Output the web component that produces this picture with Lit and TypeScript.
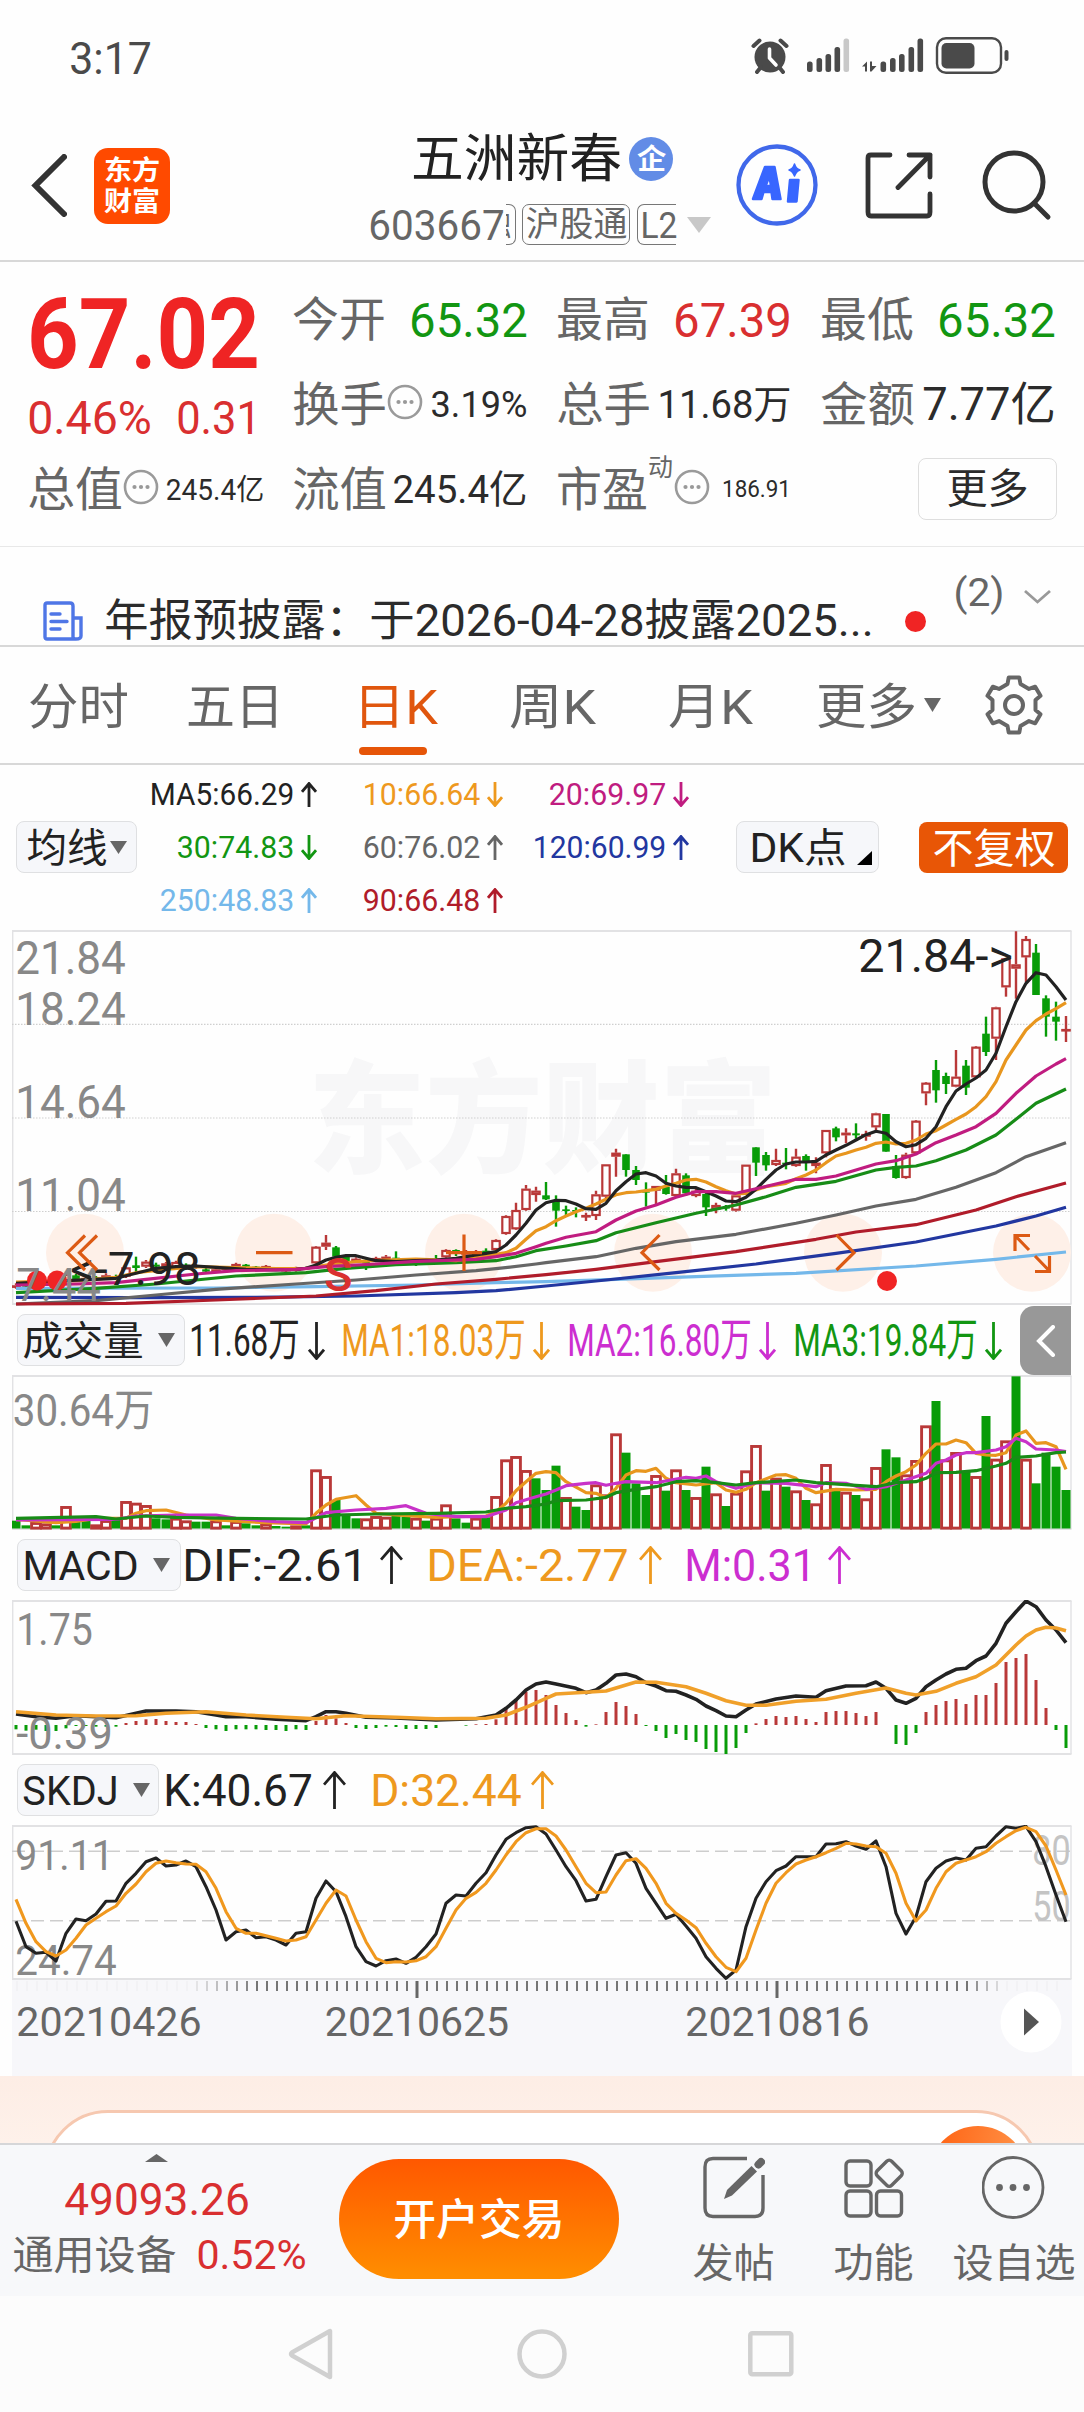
import { LitElement, html, svg, css } from "lit";
import { customElement } from "lit/decorators.js";

type Pt = [number, number];

/* ---------- data: vertical values are in thirds of a pixel inside each panel ---------- */

const parse = (s: string): Pt[] =>
  s.split(";").map((p) => p.split(",").map(Number) as Pt);

const CANDLES = `0r1096,1101,1090,1106;1g1093,1100,1090,1104;2r1090,1100,1085,1104;5r1062,1085,1055,1088;6g1066,1079,1062,1082;7r1074,1080,1070,1084;8g1072,1078,1068,1082;9r1066,1074,1060,1080;10g1068,1074,1064,1078;11r1042,1070,1040,1074;12g1036,1044,1010,1060;13r1025,1040,1020,1044;14g1034,1040,1028,1046;15r1030,1040,1026,1044;16r1026,1044,1022,1046;17g1034,1042,1030,1046;18r1036,1042,1032,1046;19g1048,1055,1044,1056;20r1048,1055,1045,1058;21r1042,1048,1040,1050;22r1032,1040,1028,1042;23g1034,1040,1032,1044;24g1040,1046,1038,1050;25r1038,1050,1035,1052;26g1044,1049,1042,1052;27r1046,1054,1044,1056;28r1042,1052,1040,1055;29g1042,1048,1040,1050;30r980,1030,978,1032;31r968,980,945,990;32g982,1010,978,1012;33g1010,1030,1006,1032;34r1016,1026,1012,1028;35g1020,1030,1018,1050;36r1014,1020,1010,1024;37r1010,1016,1005,1018;38g1013,1016,994,1018;39r1016,1020,1014,1024;40g1020,1026,1016,1038;41r1020,1024,1016,1028;42g1016,1020,1005,1024;43r990,1012,988,1014;44g990,1002,988,1008;45r995,1004,990,1008;46r995,1003,990,1006;47g992,1002,985,1006;48r960,990,958,992;49r888,942,886,944;50r870,928,848,930;51r806,870,795,872;52r812,825,800,845;53g826,838,786,840;54g842,872,826,920;55g868,873,857,885;56g870,875,862,892;57r885,890,878,903;58r823,888,812,900;59r733,830,733,835;60r698,710,686,770;61g703,750,703,770;62g750,780,738,795;63g815,818,787,860;64r798,812,798,858;65g800,822,765,824;66r760,828,746,832;67g766,820,760,828;68r812,828,800,832;69g822,862,818,888;70r855,868,848,880;71g862,866,855,872;72r826,872,826,875;73r734,822,734,824;74g682,728,682,768;75g705,736,696,752;76r720,735,686,738;77g728,732,684,748;78r710,738,686,740;79g708,724,703,752;80r728,738,712,760;81r630,700,630,712;82g625,652,620,664;83r638,646,625,670;84g640,646,610,656;85r642,650,632,662;86r580,622,578,635;87g582,695,582,695;88g738,774,705,776;89r704,774,698,776;90r602,700,600,702;91r488,520,486,556;92g450,511,420,548;93g468,492,458,522;94r470,500,390,502;95g437,503,420,525;96r380,472,378,474;97g341,396,290,408;98r262,356,260,420;99r115,202,115,230;100r133,146,34,236;101r57,112,48,186;102g98,225,72,225;103g235,290,226,350;104g290,305,245,362;105r327,330,288,366`
  .split(";")
  .map((s) => {
    const m = /^(\d+)([rg])(.*)$/.exec(s)!;
    const [top, bot, high, low] = m[3].split(",").map(Number);
    return { i: +m[1], up: m[2] === "r", top, bot, high, low };
  });

const PRICE_LINES: [string, string][] = [
  ["#74b8ea", "0,1105;20,1104;30,1100;40,1095;48,1088;53,1085;60,1078;68,1070;78,1060;90,1038;98,1018;105,996"],
  ["#2237a0", "0,1132;12,1133;24,1132;34,1128;44,1118;48,1112;53,1098;59,1080;66,1058;74,1032;82,1000;90,966;98,918;102,888;105,862"],
  ["#666666", "0,1152;8,1142;14,1125;20,1108;28,1092;34,1080;40,1065;46,1052;48,1046;52,1032;53,1028;58,1010;62,985;66,965;72,943;78,910;82,885;86,858;90,838;94,802;98,758;101,710;105,668"],
  ["#b01c2a", "0,1152;11,1150;20,1140;30,1128;36,1112;42,1092;48,1078;53,1064;58,1048;64,1025;72,995;80,958;84,936;90,914;96,870;100,830;105,789"],
  ["#178c17", "0,1118;8,1105;14,1092;18,1080;22,1068;29,1058;33,1045;38,1034;44,1028;48,1022;50,1010;52,992;55,978;58,962;60,938;64,908;68,880;72,855;75,830;78,802;82,784;86,750;88,742;90,738;92,722;95,690;98,645;100,598;102,550;105,507"],
  ["#e8961e", "0,1086;6,1082;10,1072;12,1058;15,1048;18,1040;22,1043;26,1046;29,1045;31,1035;34,1025;37,1020;40,1017;44,1022;47,1008;48,1003;49,998;50,985;51,958;52,932;53,920;54,902;55,888;56,875;57,865;58,852;59,838;60,824;61,818;62,816;63,812;64,808;65,798;66,790;67,780;68,778;69,786;70,800;71,812;72,822;73,820;75,800;77,790;78,776;79,765;80,750;81,728;82,708;83,700;84,690;85,682;86,670;87,666;88,672;89,670;90,660;91,642;92,632;93,615;94,598;95,582;96,560;97,530;98,485;99,420;100,375;101,330;102,302;103,282;104,266;105,248"],
  ["#222222", "0,1090;5,1082;8,1078;10,1075;12,1060;14,1045;16,1040;18,1038;20,1042;23,1048;26,1050;28,1048;29,1045;30,1035;31,1020;32,1012;33,1007;34,1007;35,1015;36,1022;38,1025;40,1022;42,1020;44,1015;46,1005;47,1000;48,995;49,975;50,945;51,910;52,870;53,848;54,841;55,842;56,852;57,866;58,868;59,850;60,812;61,785;62,762;63,758;64,768;65,790;66,798;67,802;68,803;69,815;70,828;71,843;72,845;73,832;74,808;75,778;76,750;77,732;78,726;79,726;80,724;81,705;82,690;83,676;84,660;85,644;86,634;87,640;88,665;89,680;90,674;91,655;92,620;93,560;94,513;95,492;96,474;97,450;98,400;99,320;100,245;101,190;102,158;103,165;104,200;105,240"],
  ["#c01c80", "0,1095;6,1092;10,1088;13,1078;18,1062;22,1052;28,1048;31,1040;36,1032;40,1024;46,1018;48,1010;50,1000;52,980;53,970;55,952;58,935;60,900;62,873;64,855;66,832;68,815;70,815;72,820;74,806;76,792;78,778;80,778;82,768;84,750;86,732;88,722;90,702;92,668;94,645;96,620;98,580;100,520;102,468;104,432;105,416"],
];

const VOLUME = "662g 676g 668r 672r 676g 620r 662g 660g 675r 662r 658g 605r 610r 617r 655g 658g 655r 663r 665g 665g 663r 676g 665r 670g 676g 672r 678g 680g 678r 676g 510r 530r 600g 645g 655g 657r 650r 652r 645g 650g 655r 662g 655r 615r 655g 668g 655r 652g 590r 480r 470r 512r 535g 570g 497g 593r 620g 630g 555r 585r 402r 458g 550g 585g 527r 572g 510r 570g 593r 500g 582r 618g 580r 513r 437r 572g 535r 560g 573r 600g 612r 494r 565g 577r 585g 597r 503r 448g 472g 525r 482r 378r 303g 480r 458r 512g 530r 348g 478r 423r 229g 478r 550g 458g 500g 570g"
  .split(" ")
  .map((s) => ({ v: parseInt(s), up: s.endsWith("r") }));

const VOLUME_LINES: [string, string][] = [
  ["#e8961e", "0,658;4,668;6,664;8,655;11,655;12,640;13,632;15,630;17,645;20,660;25,668;29,672;30,640;31,615;32,598;34,587;35,615;36,640;38,645;42,652;44,650;47,648;48,635;49,610;50,572;51,545;52,520;53,515;54,518;55,545;57,578;58,580;59,593;60,565;61,525;62,512;63,514;64,505;65,535;66,548;68,555;70,548;71,570;72,577;73,568;74,548;76,525;77,524;78,535;79,565;80,578;82,568;84,570;86,568;87,545;88,528;89,515;90,495;91,460;92,432;93,432;94,420;95,428;96,460;97,465;98,466;99,458;100,405;101,393;102,430;103,428;104,440;105,508"],
  ["#c832c8", "0,660;10,658;12,648;16,645;20,645;22,655;26,665;29,668;31,638;34,630;37,625;39,617;41,640;44,650;47,650;49,630;50,608;52,590;53,582;54,570;55,557;57,550;58,548;59,556;60,550;61,545;64,548;67,532;68,535;69,528;70,545;72,565;74,548;77,550;80,560;81,548;83,550;85,568;87,560;89,540;91,520;92,490;93,480;94,465;95,458;96,458;98,450;99,440;100,415;101,425;102,447;104,450;105,455"],
  ["#178c17", "0,655;8,650;10,657;13,648;16,652;22,655;29,657;32,645;36,642;42,640;47,636;49,625;51,620;53,612;54,602;57,600;59,592;60,578;62,568;64,560;66,545;68,542;70,548;72,555;74,548;78,540;80,548;84,556;86,560;88,548;90,545;91,535;92,518;94,517;96,512;98,498;99,490;100,472;102,468;104,458;105,456"],
];

const HIST = [598, 602, 599, 603, 603, 595, 588, 588, 590, 590, 590, 579, 573, 568, 567, 573, 576, 576, 582, 594, 598, 603, 598, 598, 598, 600, 600, 603, 598, 600, 573, 555, 565, 579, 594, 597, 594, 590, 591, 597, 597, 597, 594, 585, 585, 587, 583, 582, 568, 532, 510, 485, 480, 495, 525, 549, 570, 590, 583, 546, 516, 528, 552, 588, 603, 624, 612, 630, 636, 657, 666, 672, 654, 609, 580, 567, 558, 561, 558, 567, 576, 546, 543, 543, 549, 558, 546, 585, 642, 645, 609, 546, 525, 513, 507, 522, 495, 495, 459, 396, 384, 372, 450, 534, 600, 654];

const MACD_LINES: [string, string][] = [
  ["#222222", "0,552;2,560;4,565;6,557;10,563;12,550;13,543;16,543;18,545;20,555;21,560;23,560;26,568;29,572;30,560;31,545;32,545;33,550;35,562;38,564;42,570;46,566;48,555;49,535;50,510;51,480;52,462;53,456;54,462;56,475;57,488;58,480;59,460;60,435;61,432;62,440;63,458;64,468;65,482;66,484;67,495;68,508;69,528;70,542;71,558;72,560;73,540;74,522;76,507;78,498;80,502;81,482;83,468;85,467;86,456;87,475;88,510;89,520;90,505;91,470;92,450;93,432;94,418;95,415;96,392;97,378;98,340;99,280;100,245;101,213;102,230;103,270;104,300;105,338"],
  ["#f0a02a", "0,545;4,555;8,558;12,557;15,550;19,545;23,555;27,562;30,566;33,557;38,562;42,566;47,565;49,555;51,532;53,505;54,492;57,487;59,483;61,465;62,456;64,457;67,470;69,490;71,512;73,526;75,526;78,514;81,508;84,490;87,474;89,490;90,495;92,484;94,460;96,440;98,405;100,345;101,318;102,300;103,292;104,294;105,302"],
];

const SKDJ_LINES: [string, string][] = [
  ["#222222", "0,484;1,560;2,580;3,577;4,603;5,520;6,477;7,482;8,462;9,424;10,423;11,370;12,340;13,305;14,294;15,318;16,315;17,303;18,320;19,380;20,450;21,540;22,515;23,510;24,533;25,530;26,540;27,555;28,520;29,515;30,415;31,363;32,395;33,470;34,560;35,605;36,618;37,602;38,597;39,610;40,592;41,560;42,522;43,430;44,405;45,408;46,370;47,338;48,285;49,238;50,218;51,203;52,200;53,222;54,270;55,320;56,362;57,423;58,418;59,350;60,285;61,278;62,310;63,385;64,430;65,475;66,463;67,498;68,535;69,590;70,625;71,655;72,630;73,500;74,415;75,365;76,332;77,318;78,290;80,290;81,252;82,251;83,245;84,258;85,268;86,243;87,320;88,460;89,522;90,470;91,365;92,325;93,303;94,294;95,300;96,265;97,260;98,228;99,200;100,205;101,199;102,245;103,320;104,405;105,485"],
  ["#f0981e", "0,418;1,490;2,545;3,575;4,588;5,570;6,535;7,495;8,475;9,455;10,438;11,400;12,372;13,335;14,310;15,303;16,308;17,312;18,313;19,335;20,385;21,455;22,505;23,520;24,520;25,527;26,535;27,543;28,540;29,530;30,480;31,430;32,390;33,408;34,480;35,545;36,595;37,608;38,605;39,606;40,602;41,590;42,560;43,505;44,450;45,415;46,397;47,370;48,330;49,285;50,245;51,218;52,206;53,206;54,228;55,270;56,320;57,370;58,398;59,396;60,345;61,302;62,296;63,325;64,370;65,430;66,460;67,480;68,503;69,550;70,590;71,622;72,635;73,595;74,510;75,430;76,370;77,338;78,312;79,300;80,290;81,278;82,265;83,250;84,252;85,258;86,260;87,280;88,340;89,430;90,483;91,450;92,385;93,335;94,310;95,300;96,290;97,275;98,250;99,230;100,212;101,202;102,215;103,258;104,330;105,405"],
];

/* ---------- drawing helpers ---------- */

const px = (i: number) => 16 + 10 * i;
const py = (v: number) => v / 3;

/** A line of text whose ink spans exactly `w` pixels; the box is as tall as its capitals. */
const fit = (text: string, w: number, size: number, cls = "") => {
  const h = size * 0.72;
  return html`<svg class="t ${cls}" width=${w} height=${h}>
    <text x=${-size * 0.04} y=${h} font-size=${size} textLength=${w + size * 0.08} lengthAdjust="spacingAndGlyphs">${text}</text>
  </svg>`;
};

const label = (text: string, x: number, y: number, w: number, size: number, cls = "") =>
  svg`<text class=${cls} x=${x - size * 0.04} y=${y} font-size=${size} textLength=${w + size * 0.08} lengthAdjust="spacingAndGlyphs">${text}</text>`;

const arrow = (up: boolean, w: number, h: number, cls: string) => {
  const d = up
    ? `M${w / 2} ${h}V2M1 ${w * 0.55 + 1}L${w / 2} 1.5L${w - 1} ${w * 0.55 + 1}`
    : `M${w / 2} 0V${h - 2}M1 ${h - w * 0.55 - 1}L${w / 2} ${h - 1.5}L${w - 1} ${h - w * 0.55 - 1}`;
  return html`<svg class="arrow ${cls}" width=${w} height=${h}><path d=${d} /></svg>`;
};

const tri = (w: number, h: number) =>
  html`<svg class="tri" width=${w} height=${h}><path d="M0 0H${w}L${w / 2} ${h}Z" /></svg>`;

const gap = (w: number) => html`<span style="width:${w}px"></span>`;

const line = ([color, data]: [string, string], width = 3.2) =>
  svg`<polyline class="ln" stroke=${color} stroke-width=${width}
    points=${parse(data).map(([i, v]) => `${px(i)},${py(v).toFixed(1)}`).join(" ")} />`;

const frame = (top: number, bottom: number) => svg`
  <path class="frame" d="M12 ${top}H1071.5M12 ${bottom}H1071.5" />
  <path class="frame side" d="M12.7 ${top}V${bottom}M1071 ${top}V${bottom}" />`;

const more = html`<svg class="moredots" width="36" height="36" viewBox="0 0 36 36">
  <circle cx="18" cy="18" r="16" fill="none" stroke="#9a9a9a" stroke-width="2.6" />
  <circle cx="11.5" cy="18" r="2.1" /><circle cx="18" cy="18" r="2.1" /><circle cx="24.5" cy="18" r="2.1" />
</svg>`;

const GEAR = Array.from({ length: 6 }, (_, k) => {
  const a = (k * Math.PI) / 3 - Math.PI / 2;
  const p = (r: number, d: number) => `${(30 + r * Math.cos(a + d)).toFixed(1)} ${(30 + r * Math.sin(a + d)).toFixed(1)}`;
  return `${p(22, -0.3)}L${p(28, -0.19)}L${p(28, 0.19)}L${p(22, 0.3)}`;
}).join("L");

@customElement("app-root")
export class AppRoot extends LitElement {
  static styles = css`
    :host {
      display: block;
      width: 1084px;
      height: 2412px;
      overflow: hidden;
      background: #fefefe;
      color: #222;
      font-family: Roboto, "Noto Sans CJK SC", sans-serif;
    }
    * { box-sizing: border-box; }
    svg { display: block; flex: none; }
    .t { overflow: visible; fill: currentColor; white-space: pre; }
    .row { display: flex; align-items: center; }
    .arrow { fill: none; stroke: currentColor; stroke-width: 2.8; }
    .tri { fill: #666; }
    .dark { color: #2b2b2b; }
    .black { color: #222; }
    .gray { color: #666; }
    .red { color: #d92f30; }
    .green { color: #129612; }
    .orange { color: #ee991e; }
    .deep { color: #e0560e; }
    .pink { color: #c01c80; }
    .violet { color: #cc2ed0; }
    .blue { color: #2237a0; }
    .sky { color: #74b8ea; }
    .wine { color: #b01c2a; }
    .white { color: #fff; }
    .medium { font-weight: 500; }
    .bold { font-weight: 700; }

    .status { height: 115px; padding: 0 75px 0 71px; justify-content: space-between; color: #4a4a4a; }
    .status .icons { margin-top: -4px; }

    .header { height: 147px; border-bottom: 2px solid #d8d8d8; align-items: flex-start; padding-left: 31px; }
    .back { margin-top: 39px; }
    .logo {
      width: 76px; height: 76px; margin: 33px 0 0 27px; border-radius: 14px; background: #ff4a00;
      display: flex; flex-direction: column; align-items: center; justify-content: center; gap: 12px;
    }
    .title { width: 341px; margin: 18px 0 0 200px; }
    .name { height: 52px; padding-left: 43px; gap: 9px; }
    .badge { width: 44px; height: 44px; border-radius: 50%; background: #628ce6; display: grid; place-items: center; }
    .sub { height: 42px; margin-top: 19px; }
    .tag { height: 41px; margin-top: -2px; border: 1.5px solid #777; border-radius: 7px; display: flex; align-items: center; }
    .tag.cut { width: 10px; border-left: 0; margin: -2px 6px 0 3px; border-radius: 0 7px 7px 0; overflow: hidden; }
    .tag.cut .t { margin-left: -26px; }
    .tag.mid { width: 109px; padding-left: 4px; }
    .tag.l2 { width: 39px; margin-left: 7px; padding-left: 4px; border-right: 0; border-radius: 7px 0 0 7px; }
    .sub .tri { fill: #c8c8c8; margin-left: 11px; }
    .ai { margin: 28px 0 0 25px; }
    .share { margin: 37px 0 0 47px; }
    .search { margin: 34px 0 0 49px; }

    .quote { display: flex; height: 285px; border-bottom: 1.5px solid #e8e8e8; padding-left: 29px; }
    .price { width: 265px; }
    .price .big { height: 71px; margin: 35px 0 0 2px; color: #ef2424; }
    .price .chg { height: 34px; margin-top: 33px; gap: 28px; }
    .price .cell { margin-top: 31px; }
    .grid { display: grid; grid-template-columns: 232px 232px 232px; column-gap: 32px; row-gap: 39px; padding-top: 34px; height: 260px; grid-template-rows: 46px 46px 46px; }
    .cell { display: flex; align-items: center; justify-content: space-between; height: 46px; }
    .cell .row { height: 46px; }
    .cell.c1 { width: 234px; }
    .cell .moredots { margin: -5px 0 0 2px; }
    .moredots { fill: #999; }
    .sup { align-self: flex-start; margin: -8px 0 0 3px; }
    .btn-more { justify-self: end; align-self: center; width: 139px; height: 62px; margin-right: -3px; border: 1.5px solid #dedede; border-radius: 8px; display: grid; place-items: center; }
    .btn-more .t { margin-top: -3px; }

    .news { height: 100px; border-bottom: 2px solid #d8d8d8; padding-left: 43px; align-items: flex-start; }
    .news .doc { margin-top: 53px; }
    .news .txt { margin: 57px 0 0 23px; }
    .news .dot { width: 21px; height: 21px; border-radius: 50%; background: #f02424; margin: 64px 0 0 33px; }
    .news .cnt { margin: 32px 0 0 29px; }
    .news .chev { margin: 42px 0 0 20px; }

    .tabs { height: 118px; border-bottom: 2px solid #d8d8d8; align-items: flex-start; padding: 42px 0 0 30px; }
    .tab { position: relative; height: 34px; }
    .tab.on::after { content: ""; position: absolute; left: 4px; top: 58px; width: 68px; height: 8px; border-radius: 4px; background: #e65508; }
    .tabs .tri { margin: 9px 0 0 9px; }
    .gear { margin: -14px 0 0 43px; }

    .legend { height: 165px; align-items: flex-start; padding-left: 16px; }
    .chip { background: #f6f7fa; border: 1.5px solid #dfe0e2; border-radius: 8px; height: 52px; display: flex; align-items: center; }
    .chip.ma { width: 121px; margin-top: 56px; padding-left: 11px; }
    .chip.dk { width: 143px; margin: 56px 0 0 47px; padding-left: 14px; }
    .chip.dk .corner { margin: 22px 0 0 12px; }
    .mas { display: grid; grid-template-columns: 180px 186px 186px; grid-template-rows: 53px 53px 53px; padding-top: 3px; }
    .ma-item { display: flex; align-items: center; justify-content: flex-end; gap: 8px; }
    .adj { width: 149px; height: 51px; border-radius: 8px; background: #e85606; margin: 57px 0 0 40px; display: grid; place-items: center; }

    .panel { margin-left: 12px; overflow: hidden; }
    .frame { fill: none; stroke: #e2e2e4; stroke-width: 2; }
    .side { stroke-width: 1.4; }
    .dots { stroke: #cfcfcf; stroke-width: 1.2; stroke-dasharray: 1.5 1.5; }
    .dash { stroke: #cdcdcd; stroke-width: 1.4; stroke-dasharray: 13 6; }
    .ln { fill: none; stroke-linejoin: round; }
    .axis { fill: #888; }
    .axis.pale { fill: #c4c4c4; }
    .note { fill: #222; }
    .mark { fill: #d93030; font-weight: 500; }
    .wm { fill: #f7f7f8; font-weight: 900; }
    .ctl { fill: #fef0e8; }
    .ctl-ic { fill: none; stroke: #dc5a14; stroke-width: 3.2; }
    .alert { fill: #f02424; }
    .up { fill: #fff; stroke: #b93838; }
    .upw { stroke: #b93838; stroke-width: 2.4; }
    .dn { fill: #089c08; }
    .dnw { stroke: #089c08; stroke-width: 2.4; }
    .hist { stroke-width: 3; }

    .ind { height: 70px; padding-left: 17px; }
    .ind.vol { height: 69px; }
    .ind .chip { padding-left: 6px; margin-top: -1px; }
    .ind .tri { margin-left: 16px; }
    .tab-fold { width: 51px; height: 69px; margin-left: 18px; border-radius: 14px 0 0 14px; background: #989898; display: grid; place-items: center; }

    .timeline { height: 96px; margin: 0 12px; background: #f7f7fa; }
    .promo { height: 67px; overflow: hidden; background: linear-gradient(#fdede5, #fef1ea); padding: 34px 44px 0; }
    .promo .card { height: 130px; border: 3px solid #f6c8b0; border-radius: 64px; background: #fff; display: flex; justify-content: flex-end; padding: 13px 10px 0 0; }
    .promo .ball { width: 98px; height: 98px; border-radius: 50%; background: linear-gradient(100deg, #ff6010, #ff9a50); }

    .bottom { height: 153px; background: #f7f8fa; border-top: 2px solid #d6d6d8; align-items: flex-start; }
    .index { width: 313px; display: flex; flex-direction: column; align-items: center; padding-top: 9px; }
    .index .row { margin: 24px 0 0 5px; gap: 23px; }
    .index .val { margin-top: 21px; }
    .index .tri { transform: scaleY(-1); }
    .trade { width: 280px; height: 120px; margin: 14px 0 0 26px; border-radius: 60px; background: linear-gradient(#ff5800, #ff8e00); display: grid; place-items: center; }
    .act { display: flex; flex-direction: column; align-items: center; padding-top: 11px; gap: 29px; }
    .nav { height: 116px; background: #fcfcfc; padding-left: 288px; }
    .nav svg { fill: none; stroke: #d0d0d0; stroke-width: 4.5; }
    .nav .home { margin-left: 183px; }
    .nav .recent { margin-left: 181px; }
  `;

  private header() {
    return html`
      <div class="row status">
        ${fit("3:17", 79, 44)}
        <svg class="icons" width="258" height="38" viewBox="0 0 258 38">
          <g fill="#4a4a4a">
            <circle cx="19" cy="20" r="15.5" />
            <path d="M10 30L6 35M28 30L32 35M2.500 9L8.500 3.500M35.500 9L29.500 3.500" stroke="#4a4a4a" stroke-width="4" stroke-linecap="round" />
            <path d="M18.500 12V21L25 28" fill="none" stroke="#fff" stroke-width="3.600" stroke-linecap="round" stroke-linejoin="round" />
            <rect x="56" y="24.500" width="5.600" height="10.500" rx="2.500" />
            <rect x="65.500" y="21" width="5.600" height="14" rx="2.500" />
            <rect x="74.500" y="17" width="5.600" height="18" rx="2.500" />
            <rect x="83.500" y="10" width="5.600" height="25" rx="2.500" />
            <rect x="92.500" y="1.500" width="5.600" height="33.500" rx="2.500" fill="#c8c8c8" />
            <path d="M111 29.500L116 24.500V34.500H114V29.500ZM119 24.500H121V29H125.500L120.500 34.500H119Z" />
            <rect x="129.500" y="24.500" width="5.600" height="10.500" rx="2.500" />
            <rect x="139" y="21" width="5.600" height="14" rx="2.500" />
            <rect x="148" y="17" width="5.600" height="18" rx="2.500" />
            <rect x="157.500" y="10" width="5.600" height="25" rx="2.500" />
            <rect x="166.500" y="1.500" width="5.600" height="33.500" rx="2.500" />
            <rect x="186" y="1.200" width="64" height="34.500" rx="9" fill="none" stroke="#4a4a4a" stroke-width="2.400" />
            <rect x="190.500" y="6" width="33" height="25.500" rx="5" />
            <rect x="253.500" y="13" width="4" height="11" rx="2" />
          </g>
        </svg>
      </div>
      <div class="row header">
        <svg class="back" width="36" height="63" viewBox="0 0 36 63"><path d="M33 3L4.500 31.500L33 60" fill="none" stroke="#333" stroke-width="6" stroke-linecap="round" /></svg>
        <div class="logo">${fit("东方", 54, 27, "white bold")}${fit("财富", 54, 27, "white bold")}</div>
        <div class="title">
          <div class="row name">${fit("五洲新春", 207, 52, "black")}<span class="badge">${fit("企", 27, 28, "white bold")}</span></div>
          <div class="row sub">
            ${fit("603667", 133, 42, "gray")}
            <span class="tag cut">${fit("融", 30, 32, "gray")}</span>
            <span class="tag mid">${fit("沪股通", 99, 34, "gray")}</span>
            <span class="tag l2">${fit("L2", 34, 37, "gray")}</span>
            ${tri(24, 16)}
          </div>
        </div>
        <svg class="ai" width="82" height="84" viewBox="0 0 82 84">
          <circle cx="41" cy="42" r="38.500" fill="none" stroke="#4068ea" stroke-width="4.300" />
          <g fill="#3866ff" stroke="#3866ff" stroke-width="2.500" stroke-linejoin="round">
            <path fill-rule="evenodd" d="M29 24H38.500L44.500 56H36.500L35.500 49H27.500L25.500 56H17ZM33.500 33L29.500 43H35Z" />
            <path d="M54 37H62.500L60.500 58.500H52Z" />
            <path d="M58.500 21Q60 26 64 27Q60 28.500 58.500 33Q57 28.500 53 27Q57 26 58.500 21Z" stroke-width="1.500" />
          </g>
        </svg>
        <svg class="share" width="68" height="68" viewBox="0 0 68 68"><path d="M25 3H6Q3 3 3 6V60Q3 64 6 64H62Q65 64 65 60V42M44 3H65V25M65 3L33 35.500" fill="none" stroke="#333" stroke-width="4.800" stroke-linecap="round" stroke-linejoin="round" /></svg>
        <svg class="search" width="70" height="72" viewBox="0 0 70 72"><circle cx="32" cy="33" r="29" fill="none" stroke="#333" stroke-width="5" /><path d="M52 54L66 68" stroke="#333" stroke-width="5" stroke-linecap="round" /></svg>
      </div>`;
  }

  private quote() {
    return html`
      <div class="quote">
        <div class="price">
          <div class="big">${fit("67.02", 225, 99, "bold")}</div>
          <div class="row chg">${fit("0.46%", 121, 46, "red")}${fit("0.31", 81, 46, "red")}</div>
          <div class="cell c1"><span class="row">${fit("总值", 92, 47, "gray")}${more}</span>${fit("245.4亿", 96, 29, "dark")}</div>
        </div>
        <div class="grid">
          <div class="cell">${fit("今开", 90, 47, "gray")}${fit("65.32", 115, 48, "green")}</div>
          <div class="cell">${fit("最高", 90, 47, "gray")}${fit("67.39", 115, 48, "red")}</div>
          <div class="cell">${fit("最低", 90, 47, "gray")}${fit("65.32", 115, 48, "green")}</div>
          <div class="cell"><span class="row">${fit("换手", 91, 47, "gray")}${more}</span>${fit("3.19%", 94, 36, "dark")}</div>
          <div class="cell">${fit("总手", 91, 47, "gray")}${fit("11.68万", 131, 39, "dark")}</div>
          <div class="cell">${fit("金额", 91, 47, "gray")}${fit("7.77亿", 130, 46, "dark")}</div>
          <div class="cell">${fit("流值", 91, 47, "gray")}${fit("245.4亿", 132, 39, "dark")}</div>
          <div class="cell"><span class="row">${fit("市盈", 88, 47, "gray")}<span class="sup">${fit("动", 23, 25, "gray")}</span>${more}</span>${fit("186.91", 67, 24, "dark")}</div>
          <div class="btn-more">${fit("更多", 79, 41, "dark")}</div>
        </div>
      </div>`;
  }

  private news() {
    return html`
      <div class="row news">
        <svg class="doc" width="40" height="42" viewBox="0 0 40 42">
          <path d="M31 39H4Q2 39 2 37V5Q2 3 4 3H27Q30 3 30 6V37Q30 39 33 39Q38 39 38 36V18H31" fill="none" stroke="#4f76e6" stroke-width="3.400" />
          <path d="M8 14H17M8 21.500H24M8 29H17" stroke="#4f76e6" stroke-width="3.400" stroke-linecap="round" />
        </svg>
        <div class="row txt">${fit("年报预披露：", 262, 44, "dark")}${gap(3)}${fit("于2026-04-28披露2025...", 501, 44, "dark")}</div>
        <span class="dot"></span>
        <span class="cnt">${fit("(2)", 48, 38, "gray")}</span>
        <svg class="chev" width="30" height="16" viewBox="0 0 30 16"><path d="M2 2L14.500 13L27 2" fill="none" stroke="#999" stroke-width="2.800" /></svg>
      </div>`;
  }

  private tabs() {
    return html`
      <div class="row tabs">
        <div class="tab">${fit("分时", 97, 49, "gray")}</div>
        ${gap(61)}<div class="tab">${fit("五日", 94, 49, "gray")}</div>
        ${gap(73)}<div class="tab on">${fit("日K", 81, 49, "deep")}</div>
        ${gap(75)}<div class="tab">${fit("周K", 83, 49, "gray")}</div>
        ${gap(76)}<div class="tab">${fit("月K", 81, 49, "gray")}</div>
        ${gap(67)}<div class="tab">${fit("更多", 97, 49, "gray")}</div>
        ${tri(17, 14)}
        <svg class="gear" width="60" height="60" viewBox="0 0 60 60" fill="none" stroke="#666" stroke-width="4" stroke-linejoin="round">
          <path d="M${GEAR}Z" /><circle cx="30" cy="30" r="9" />
        </svg>
      </div>`;
  }

  private legend() {
    const items: [string, number, boolean, string][] = [
      ["MA5:66.29", 142, true, "black"], ["10:66.64", 115, false, "orange"], ["20:69.97", 115, false, "pink"],
      ["30:74.83", 115, false, "green"], ["60:76.02", 115, true, "gray"], ["120:60.99", 131, true, "blue"],
      ["250:48.83", 132, true, "sky"], ["90:66.48", 115, true, "wine"],
    ];
    return html`
      <div class="row legend">
        <div class="chip ma">${fit("均线", 78, 40, "black")}${gap(4)}${tri(17, 13)}</div>
        <div class="mas">
          ${items.map(([t, w, up, c]) => html`<div class="ma-item">${fit(t, w, 31, c)}${arrow(up, 16, 25, c)}</div>`)}
        </div>
        <div class="chip dk">${fit("DK点", 94, 40, "black")}<svg class="corner" width="15" height="14"><path d="M15 0V14H0Z" /></svg></div>
        <div class="adj">${fit("不复权", 120, 41, "white")}</div>
      </div>`;
  }

  private priceChart() {
    return html`
      <svg class="panel" width="1060" height="376" viewBox="12 10 1060 376">
        ${label("东方财富", 313, 243, 459, 122, "wm")}
        ${frame(11, 384)}
        ${[104.3, 198, 291.5].map((y) => svg`<path class="dots" d="M12 ${y}H1071" />`)}
        ${[85, 274, 464, 653, 843, 1032].map((x) => svg`<circle class="ctl" cx=${x} cy="332.700" r="39" />`)}
        ${CANDLES.map((c) => {
          const x = px(c.i);
          const h = py(c.bot - c.top);
          return c.up
            ? svg`<path class="upw" d="M${x} ${py(c.high)}V${py(c.top)}M${x} ${py(c.bot)}V${py(c.low)}" />
                <rect class="up" stroke-width="2.2" x=${x - 3.7} y=${py(c.top) + 1} width="7.4" height=${Math.max(h - 2, 0.5)} />`
            : svg`<path class="dnw" d="M${x} ${py(c.high)}V${py(c.low)}" />
                <rect class="dn" x=${x - 3.8} y=${py(c.top)} width="7.6" height=${h} />`;
        })}
        ${PRICE_LINES.map((l) => line(l))}
        <text class="mark" x="324" y="371" font-size="47">S</text>
        ${label("21.84", 17, 54, 107, 46, "axis")}
        ${label("18.24", 17, 105, 107, 46, "axis")}
        ${label("14.64", 17, 198, 107, 46, "axis")}
        ${label("11.04", 17, 291, 107, 46, "axis")}
        <circle class="alert" cx="37" cy="360.500" r="10" /><circle class="alert" cx="57" cy="360.500" r="10" />
        <circle class="alert" cx="887" cy="361" r="10" />
        ${label("7.44", 18, 381, 81, 46, "axis")}
        ${label("<-7.98", 72, 365, 127, 46, "note")}
        ${label("21.84->", 860, 52, 151, 46, "note")}
        <g class="ctl-ic">
          <path d="M85 315.500L67.500 332.700L85 350M97 315.500L79.500 332.700L97 350M256 332.700H292.500M446 332.700H482M464 314.500V351M659.500 315L642 332.700L659.500 350M836.500 315L854 332.700L836.500 350" />
          <path d="M1015 331V315.500H1030M1016 316.500L1029 330M1035 351.500H1049.500V336M1035 336L1049 350.500" />
        </g>
      </svg>`;
  }

  private volume() {
    const items: [string, number, string, number][] = [
      ["11.68万", 107, "black", 6], ["MA1:18.03万", 181, "orange", 18], ["MA2:16.80万", 181, "violet", 18.500], ["MA3:19.84万", 181, "green", 18.500],
    ];
    return html`
      <div class="row ind vol">
        <div class="chip" style="width:168px">${fit("成交量", 118, 40, "black")}${tri(17, 14)}</div>
        ${items.map(([t, w, c, m]) => html`${gap(m)}${fit(t, w, 45, c)}${gap(9.5)}${arrow(false, 17, 38, c)}`)}
        <div class="tab-fold"><svg width="20" height="32" viewBox="0 0 20 32"><path d="M17 2L3 16L17 30" fill="none" stroke="#fff" stroke-width="4" stroke-linecap="round" /></svg></div>
      </div>
      <svg class="panel" width="1060" height="155" viewBox="12 75 1060 155">
        ${frame(76, 229)}
        ${VOLUME.map(({ v, up }, i) =>
          up
            ? svg`<rect class="up" stroke-width="2.9" x=${px(i) - 4.4} y=${py(v) + 0.8} width="8.8" height=${Math.max(227.3 - py(v), 1)} />`
            : svg`<rect class="dn" x=${px(i) - 4.5} y=${py(v)} width="9" height=${228.5 - py(v)} />`
        )}
        ${VOLUME_LINES.map((l) => line(l))}
        ${label("30.64万", 14.5, 125.5, 138, 44, "axis")}
      </svg>`;
  }

  private macd() {
    return html`
      <div class="row ind">
        <div class="chip" style="width:164px">${fit("MACD", 113, 41, "black")}${tri(17, 14)}</div>
        ${gap(3)}${fit("DIF:-2.61", 182, 45, "black")}${gap(14)}${arrow(true, 23, 38, "black")}
        ${gap(25)}${fit("DEA:-2.77", 199, 45, "orange")}${gap(12)}${arrow(true, 23, 38, "orange")}
        ${gap(24)}${fit("M:0.31", 128, 45, "violet")}${gap(14)}${arrow(true, 23, 38, "violet")}
      </div>
      <svg class="panel" width="1060" height="155" viewBox="12 70 1060 155">
        ${frame(71, 224)}
        ${HIST.map((v, i) =>
          Math.abs(v - 585) < 1
            ? ""
            : svg`<path class="hist ${v > 585 ? "dnw" : "upw"}" d="M${px(i)} 195V${py(v)}" />`
        )}
        ${MACD_LINES.map((l) => line(l, 3.6))}
        ${label("1.75", 18, 115, 73, 44, "axis")}
        ${label("-0.39", 18, 219, 93, 44, "axis")}
      </svg>`;
  }

  private skdj() {
    return html`
      <div class="row ind">
        <div class="chip" style="width:142px">${fit("SKDJ", 93, 41, "black")}${tri(17, 14)}</div>
        ${gap(6)}${fit("K:40.67", 146, 45, "black")}${gap(12)}${arrow(true, 23, 38, "black")}
        ${gap(26)}${fit("D:32.44", 148, 45, "orange")}${gap(11)}${arrow(true, 23, 38, "orange")}
      </div>
      <svg class="panel" width="1060" height="155" viewBox="12 65 1060 155">
        ${frame(66, 219)}
        <path class="dash" d="M12 91.300H1071M12 160.700H1071" />
        ${label("80", 1034, 105, 35, 42, "axis pale")}
        ${label("50", 1034, 160.5, 35, 42, "axis pale")}
        ${label("91.11", 17, 110, 95, 43, "axis")}
        ${label("24.74", 17, 215, 98, 43, "axis")}
        ${SKDJ_LINES.map((l) => line(l, 3.1))}
      </svg>
      <svg class="timeline" width="1060" height="96" viewBox="12 0 1060 96">
        ${Array.from({ length: 105 }, (_, i) => {
          const major = i === 40 || i === 76;
          const fade = Math.max(0.03, Math.min(1, (i - 17) / 7, (99 - i) / 4));
          return svg`<path d="M${px(i) + 1} 1V${major ? 18 : 11}" stroke="#666" stroke-width=${major ? 3 : 1.8} stroke-opacity=${fade} />`;
        })}
        ${label("20210426", 18, 56, 182, 41, "gray t")}
        ${label("20210625", 326.5, 56, 181, 41, "gray t")}
        ${label("20210816", 687, 56, 181, 41, "gray t")}
        <circle cx="1031" cy="42" r="30.500" fill="#fff" /><path d="M1024 28.500L1039 42L1024 55.500Z" fill="#555" />
      </svg>`;
  }

  private footer() {
    return html`
      <div class="promo"><div class="card"><div class="ball"></div></div></div>
      <div class="row bottom">
        <div class="index">
          ${tri(23, 8)}
          <div class="val">${fit("49093.26", 182, 45, "red")}</div>
          <div class="row">${fit("通用设备", 161, 40, "gray")}${fit("0.52%", 107, 41, "red")}</div>
        </div>
        <div class="trade">${fit("开户交易", 168, 43, "white medium")}</div>
        ${gap(75)}
        <div class="act">
          <svg width="62" height="63" viewBox="0 0 62 63" fill="none" stroke="#666">
            <path d="M44 2.500H10Q2 2.500 2 11V52Q2 60.500 10 60.500H52Q60 60.500 60 52V19" stroke-width="3.400" />
            <path d="M58 6L55.500 8.500" stroke-width="8" stroke-linecap="round" />
            <path d="M48.500 10L54 15.500L29 39.500L21 43L24 34Z" fill="#666" stroke="none" />
          </svg>
          ${fit("发帖", 79, 40, "gray")}
        </div>
        ${gap(62)}
        <div class="act">
          <svg width="60" height="63" viewBox="0 0 60 63" fill="none" stroke="#666" stroke-width="3.400">
            <rect x="2" y="5" width="25" height="25" rx="4" /><rect x="2" y="35" width="25" height="25" rx="4" /><rect x="32.500" y="35" width="25" height="25" rx="4" />
            <rect x="35" y="7" width="20.500" height="20.500" rx="3.500" transform="rotate(45 45.200 17.200)" />
          </svg>
          ${fit("功能", 77, 40, "gray")}
        </div>
        ${gap(42)}
        <div class="act">
          <svg width="64" height="63" viewBox="0 0 64 63">
            <circle cx="31" cy="31.500" r="30" fill="none" stroke="#666" stroke-width="2.800" />
            <g fill="#666"><circle cx="17.500" cy="31.500" r="3.400" /><circle cx="31" cy="31.500" r="3.400" /><circle cx="44.500" cy="31.500" r="3.400" /></g>
          </svg>
          ${fit("设自选", 120, 40, "gray")}
        </div>
      </div>
      <div class="row nav">
        <svg width="46" height="54" viewBox="0 0 46 54"><path d="M42 4V50L4 28.500Q2 27 4 25.500Z" stroke-linejoin="round" /></svg>
        <svg class="home" width="50" height="50"><circle cx="25" cy="25" r="22.500" /></svg>
        <svg class="recent" width="46" height="46"><rect x="2.300" y="2.300" width="41" height="41" rx="2" /></svg>
      </div>`;
  }

  render() {
    return html`${this.header()}${this.quote()}${this.news()}${this.tabs()}${this.legend()}${this.priceChart()}${this.volume()}${this.macd()}${this.skdj()}${this.footer()}`;
  }
}
